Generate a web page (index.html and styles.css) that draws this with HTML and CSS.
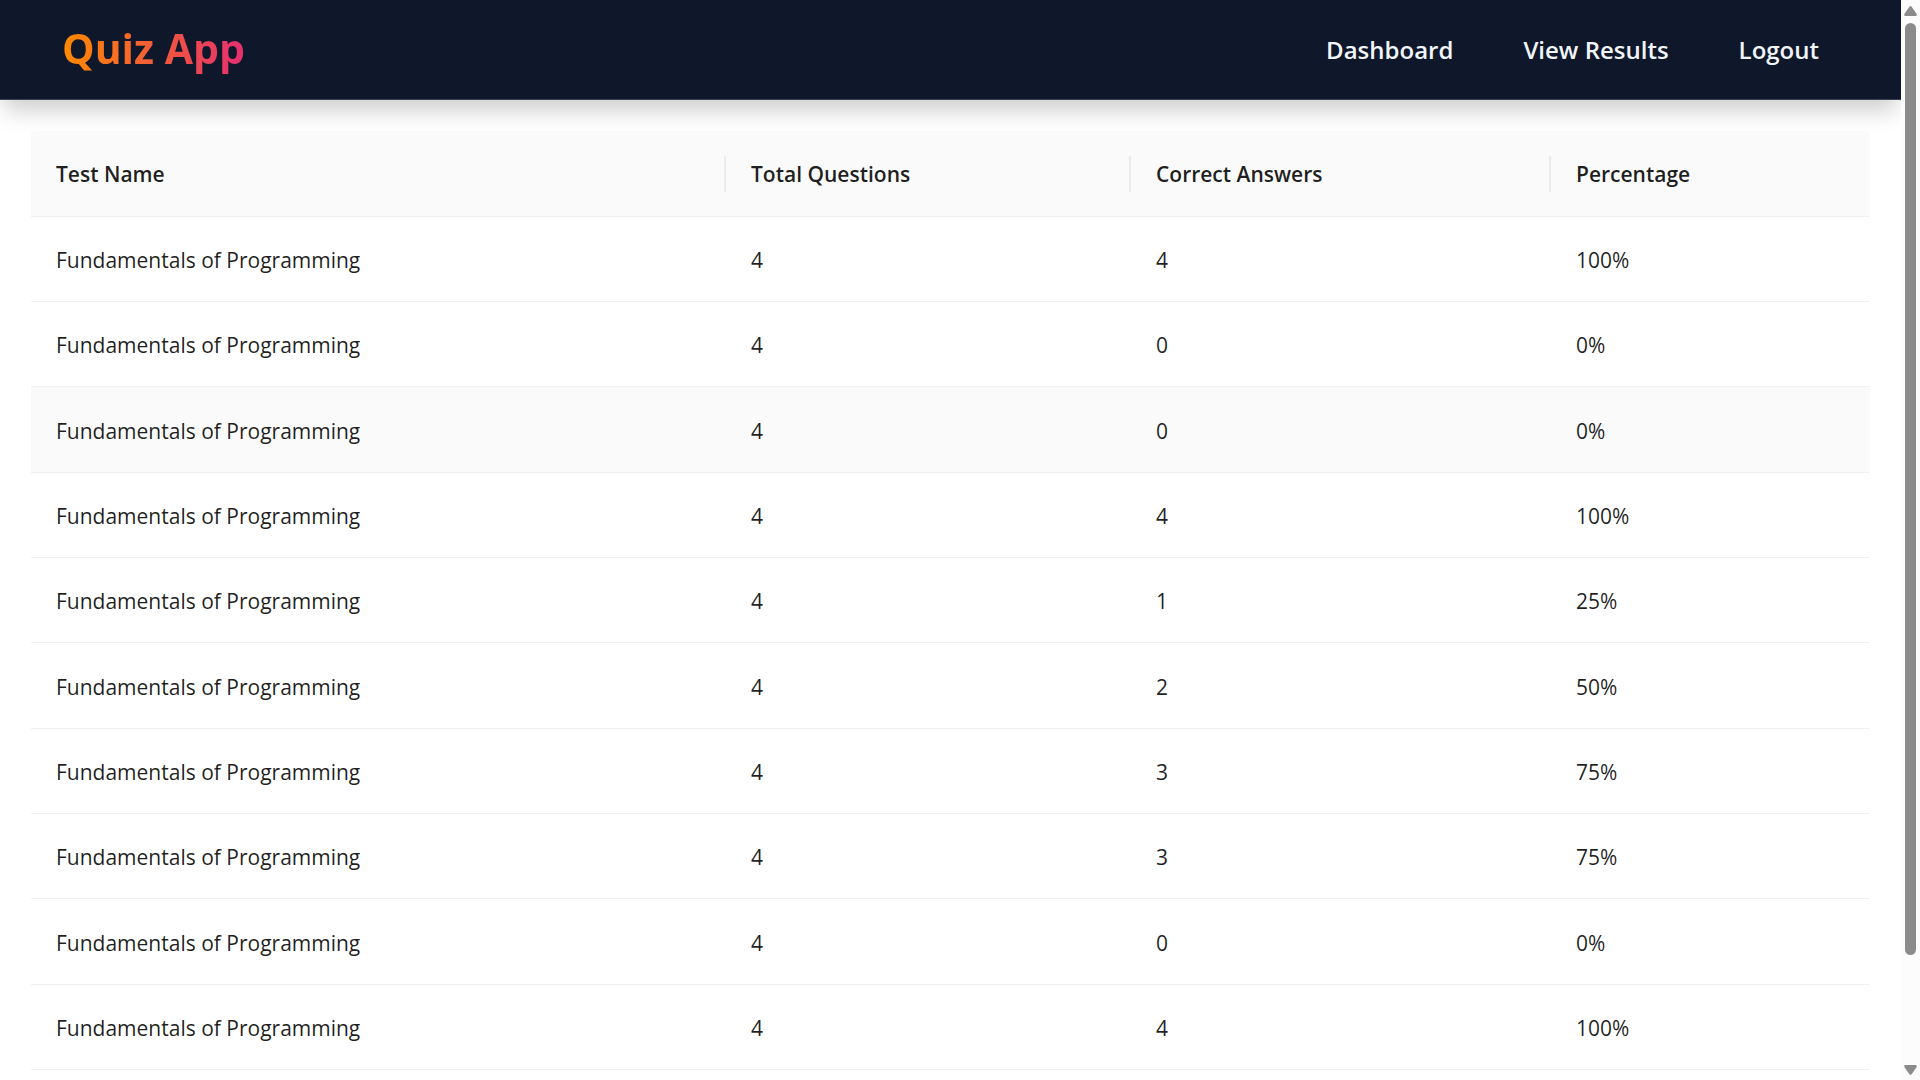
FILE: index.html
```html
<!DOCTYPE html>
<html lang="en">
<head>
<meta charset="utf-8">
<meta name="viewport" content="width=device-width, initial-scale=1">
<title>Quiz App</title>
<link rel="stylesheet" href="styles.css">
</head>
<body>
<div class="page">
  <header class="navbar">
    <div class="logo">Quiz App</div>
    <nav class="nav-links">
      <a href="#dashboard">Dashboard</a>
      <a href="#results">View Results</a>
      <a href="#logout">Logout</a>
    </nav>
  </header>
  <main class="content">
    <table class="results">
      <colgroup>
        <col>
        <col class="col-total">
        <col class="col-correct">
        <col class="col-percent">
      </colgroup>
      <thead>
        <tr><th scope="col">Test Name</th><th scope="col">Total Questions</th><th scope="col">Correct Answers</th><th scope="col">Percentage</th></tr>
      </thead>
      <tbody>
        <tr><td>Fundamentals of Programming</td><td>4</td><td>4</td><td>100%</td></tr>
        <tr><td>Fundamentals of Programming</td><td>4</td><td>0</td><td>0%</td></tr>
        <tr class="is-hovered"><td>Fundamentals of Programming</td><td>4</td><td>0</td><td>0%</td></tr>
        <tr><td>Fundamentals of Programming</td><td>4</td><td>4</td><td>100%</td></tr>
        <tr><td>Fundamentals of Programming</td><td>4</td><td>1</td><td>25%</td></tr>
        <tr><td>Fundamentals of Programming</td><td>4</td><td>2</td><td>50%</td></tr>
        <tr><td>Fundamentals of Programming</td><td>4</td><td>3</td><td>75%</td></tr>
        <tr><td>Fundamentals of Programming</td><td>4</td><td>3</td><td>75%</td></tr>
        <tr><td>Fundamentals of Programming</td><td>4</td><td>0</td><td>0%</td></tr>
        <tr><td>Fundamentals of Programming</td><td>4</td><td>4</td><td>100%</td></tr>
      </tbody>
    </table>
  </main>
</div>
<div class="scrollbar" aria-hidden="true">
  <svg class="arrow" viewBox="0 0 13 10"><path d="M5.2 .9Q6.5-.7 7.8.9L12.6 8Q13.2 10 11.6 10H1.4Q-.2 10 .4 8Z"/></svg>
  <div class="track"><div class="thumb"></div></div>
  <svg class="arrow" viewBox="0 0 13 10"><path d="M5.2 9.1Q6.5 10.7 7.8 9.1L12.6 2Q13.2 0 11.6 0H1.4Q-.2 0 .4 2Z"/></svg>
</div>
</body>
</html>
```
FILE: styles.css
```css
* {
  box-sizing: border-box;
}

body {
  margin: 0;
  height: 100vh;
  display: grid;
  grid-template-columns: 1fr 19px;
  overflow: hidden;
  background: #fff;
  color: rgba(0, 0, 0, 0.88);
  font-family: "Segoe UI", "Open Sans", "Noto Sans", sans-serif;
  font-size: 21px;
  line-height: 34px;
}

.page {
  overflow: hidden;
}

.navbar {
  display: flex;
  align-items: center;
  justify-content: space-between;
  height: 100px;
  padding: 0 82px 0 62px;
  background: #0f172a;
  border-bottom: 1px solid #3b4054;
  box-shadow: 0 14px 22px -4px rgba(0, 0, 0, 0.2);
}

.logo {
  padding-bottom: 4px;
  font-size: 41px;
  font-weight: 700;
  line-height: 60px;
  background: linear-gradient(to right, #ff8a00, #e52e71);
  background-clip: text;
  -webkit-background-clip: text;
  color: transparent;
}

.nav-links {
  display: flex;
  gap: 70px;
}

.nav-links a {
  color: #f1f5f9;
  font-size: 24px;
  font-weight: 600;
  text-decoration: none;
}

.content {
  padding: 31px;
}

.results {
  width: 100%;
  table-layout: fixed;
  border-collapse: separate;
  border-spacing: 0;
  text-align: left;
}

.col-total {
  width: 405px;
}

.col-correct {
  width: 420px;
}

.col-percent {
  width: 319px;
}

.results th,
.results td {
  height: 85px;
  padding: 2px 25px 0;
  border-bottom: 1px solid #f0f0f0;
}

.results th {
  height: 86px;
  padding-top: 0;
  background: linear-gradient(#ebebeb, #ebebeb) right center / 2px 36px no-repeat #fafafa;
  font-weight: 600;
}

.results th:first-child {
  border-top-left-radius: 3px;
}

.results th:last-child {
  background: #fafafa;
  border-top-right-radius: 3px;
}

.results tr:nth-child(3n) td {
  height: 86px;
}

.results tr:hover td,
.results .is-hovered td {
  background: #fafafa;
}

.scrollbar {
  display: flex;
  flex-direction: column;
  align-items: center;
  gap: 7px;
  padding: 6px 0 5px;
  background: #fcfcfc;
}

.arrow {
  width: 13px;
  height: 10px;
  fill: #8b8b8b;
}

.track {
  flex: 1;
  width: 11px;
}

.thumb {
  height: 90%;
  border-radius: 6px;
  background: #8b8b8b;
}
```
